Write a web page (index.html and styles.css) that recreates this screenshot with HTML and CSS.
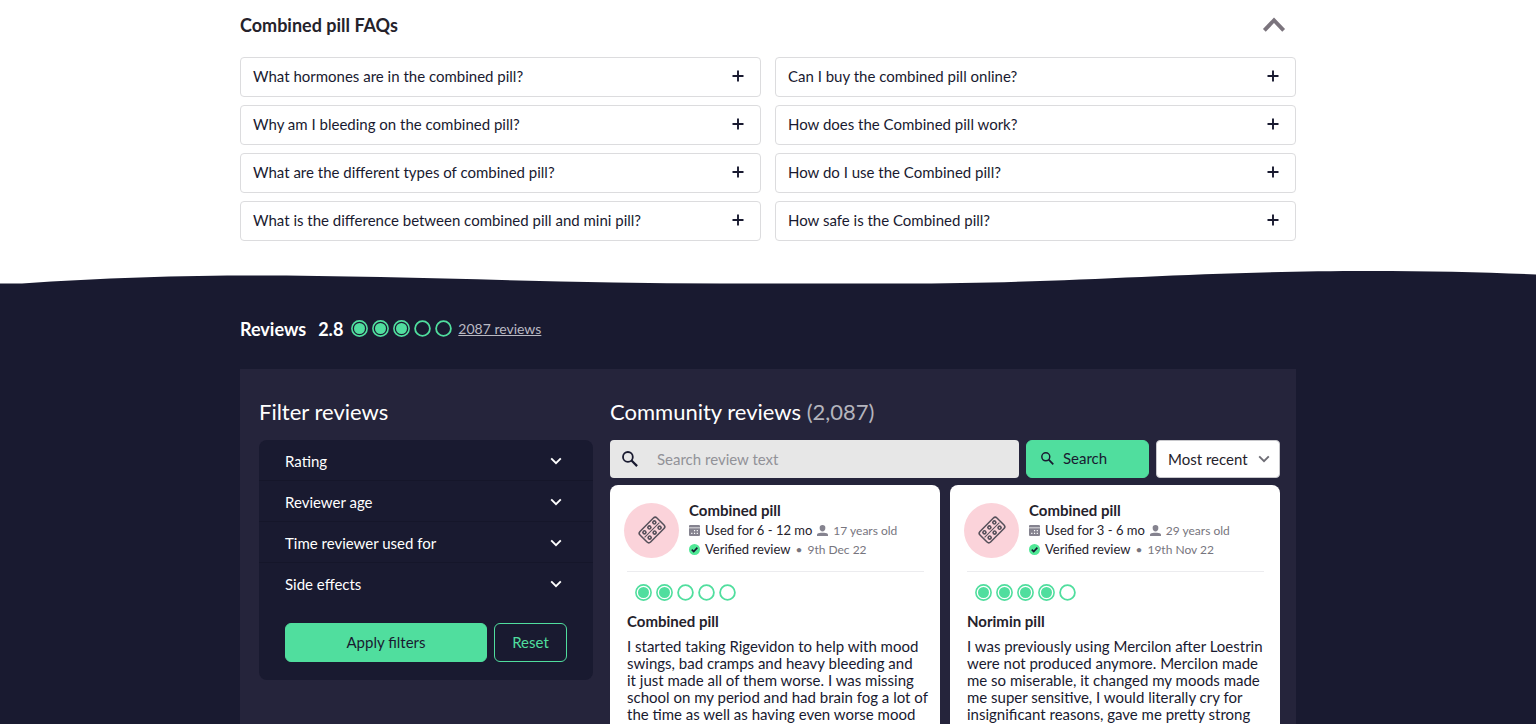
FILE: index.html
```html
<!DOCTYPE html>
<html lang="en">
<head>
<meta charset="utf-8">
<title>Combined pill reviews</title>
<link rel="stylesheet" href="styles.css">
</head>
<body>
<svg class="defs" aria-hidden="true">
  <symbol id="plus" viewBox="0 0 12 12"><path d="M6 0.5v11M0.5 6h11" stroke="currentColor" stroke-width="1.900" fill="none"/></symbol>
  <symbol id="down" viewBox="0 0 12 8"><path d="M1.200 1.400L6 6.200l4.800-4.800" stroke="currentColor" stroke-width="1.900" fill="none"/></symbol>
  <symbol id="search" viewBox="0 0 16 16"><circle cx="5.900" cy="5.900" r="4.900" stroke="currentColor" stroke-width="1.800" fill="none"/><path d="M9.500 9.500l5.600 5.600" stroke="currentColor" stroke-width="2.200"/></symbol>
  <symbol id="full" viewBox="0 0 17 17"><circle cx="8.500" cy="8.500" r="7.600" fill="none" stroke="#50de9e" stroke-width="1.600"/><circle cx="8.500" cy="8.500" r="5.500" fill="#50de9e"/></symbol>
  <symbol id="empty" viewBox="0 0 17 17"><circle cx="8.500" cy="8.500" r="7.400" fill="none" stroke="#50de9e" stroke-width="1.800"/></symbol>
  <symbol id="calendar" viewBox="0 0 10 10"><path fill="#85838f" d="M1 0h8a1 1 0 0 1 1 1v1.300H0V1a1 1 0 0 1 1-1z"/><path fill="#85838f" fill-rule="evenodd" d="M0 3h10v6a1 1 0 0 1-1 1H1a1 1 0 0 1-1-1zM4.500 4.500v1.100h1.100V4.500zM7 4.500v1.100h1.100V4.500zM2 7v1.100h1.100V7zM4.500 7v1.100h1.100V7zM7 7v1.100h1.100V7z"/></symbol>
  <symbol id="person" viewBox="0 0 10 10"><path fill="#85838f" d="M5 0a2.600 2.600 0 0 1 2.600 2.700C7.600 4.500 6.400 6 5 6S2.400 4.500 2.400 2.700A2.600 2.600 0 0 1 5 0zM0 10V8.800C0 7.700 2 7.300 3.600 7.100h2.800C8 7.300 10 7.700 10 8.800V10z"/></symbol>
  <symbol id="tick" viewBox="0 0 10 10"><circle cx="5" cy="5" r="5" fill="#50e896"/><path d="M2.500 5.100l1.800 1.700 3.300-3.500" stroke="#191a30" stroke-width="1.500" fill="none"/></symbol>
  <symbol id="blister" viewBox="0 0 30 30"><g transform="rotate(-45 15 15)" fill="none" stroke="#55505a" stroke-width="1.500"><rect x="3" y="7.500" width="24" height="15" rx="2.500"/><path d="M4.500 15h21" stroke-width="1"/><g stroke-width="1.600"><circle cx="8" cy="11.300" r="1.500"/><circle cx="15" cy="11.300" r="1.500"/><circle cx="22" cy="11.300" r="1.500"/><circle cx="8" cy="18.700" r="1.500"/><circle cx="15" cy="18.700" r="1.500"/><circle cx="22" cy="18.700" r="1.500"/></g></g></symbol>
</svg>

<section class="faqs container">
  <header class="faqs-head">
    <h2 class="title">Combined pill FAQs</h2>
    <button class="collapse" aria-label="Collapse FAQs"><svg class="collapse-icon" viewBox="0 0 22 14"><path d="M2 12.500L11 3l9 9.500" fill="none" stroke="#7b747d" stroke-width="3.600"/></svg></button>
  </header>
  <div class="faq-grid">
    <button class="faq">What hormones are in the combined pill?<svg class="plus"><use href="#plus"/></svg></button>
    <button class="faq">Can I buy the combined pill online?<svg class="plus"><use href="#plus"/></svg></button>
    <button class="faq">Why am I bleeding on the combined pill?<svg class="plus"><use href="#plus"/></svg></button>
    <button class="faq">How does the Combined pill work?<svg class="plus"><use href="#plus"/></svg></button>
    <button class="faq">What are the different types of combined pill?<svg class="plus"><use href="#plus"/></svg></button>
    <button class="faq">How do I use the Combined pill?<svg class="plus"><use href="#plus"/></svg></button>
    <button class="faq">What is the difference between combined pill and mini pill?<svg class="plus"><use href="#plus"/></svg></button>
    <button class="faq">How safe is the Combined pill?<svg class="plus"><use href="#plus"/></svg></button>
  </div>
</section>

<svg class="wave" viewBox="0 0 1536 16" preserveAspectRatio="none" aria-hidden="true"><path fill="#191a30" d="M0 13.500H22C100 8 180 5.500 256 5.500C400 5.500 560 13.500 720 13.500H900C1080 13.500 1180 1 1370 1C1430 1 1490 2.500 1536 4.500V16H0z"/></svg>

<section class="reviews">
  <div class="container">
    <header class="summary">
      <h2 class="title">Reviews</h2>
      <span class="score">2.8</span>
      <span class="dots" role="img" aria-label="2.8 out of 5"><svg class="dot"><use href="#full"/></svg><svg class="dot"><use href="#full"/></svg><svg class="dot"><use href="#full"/></svg><svg class="dot"><use href="#empty"/></svg><svg class="dot"><use href="#empty"/></svg></span>
      <a class="count" href="#community">2087 reviews</a>
    </header>

    <div class="panel">
      <aside class="filters">
        <h3 class="subtitle">Filter reviews</h3>
        <form class="filter-box">
          <button type="button" class="filter">Rating<svg class="down"><use href="#down"/></svg></button>
          <button type="button" class="filter">Reviewer age<svg class="down"><use href="#down"/></svg></button>
          <button type="button" class="filter">Time reviewer used for<svg class="down"><use href="#down"/></svg></button>
          <button type="button" class="filter">Side effects<svg class="down"><use href="#down"/></svg></button>
          <div class="filter-actions">
            <button type="button" class="btn apply">Apply filters</button>
            <button type="reset" class="btn reset">Reset</button>
          </div>
        </form>
      </aside>

      <div class="community" id="community">
        <h3 class="subtitle">Community reviews <span class="muted">(2,087)</span></h3>
        <form class="search-row">
          <label class="search-box">
            <svg class="search-icon"><use href="#search"/></svg>
            <input class="search-input" type="search" aria-label="Search review text" placeholder="Search review text">
          </label>
          <button type="button" class="btn search-btn"><svg class="search-icon small"><use href="#search"/></svg>Search</button>
          <div class="sort">
            <select class="sort-select" aria-label="Sort reviews"><option>Most recent</option></select>
            <svg class="down sort-icon"><use href="#down"/></svg>
          </div>
        </form>
        <div class="cards">
          <article class="card">
            <header class="card-head">
              <span class="avatar"><svg class="blister"><use href="#blister"/></svg></span>
              <div class="who">
                <h4 class="name">Combined pill</h4>
                <p class="meta"><svg class="mini"><use href="#calendar"/></svg>Used for 6 - 12 mo <svg class="mini"><use href="#person"/></svg><span class="grey">17 years old</span></p>
                <p class="meta"><svg class="mini"><use href="#tick"/></svg>Verified review <span class="grey">•</span><span class="grey">9th Dec 22</span></p>
              </div>
            </header>
            <div class="card-body">
              <span class="dots" role="img" aria-label="2 out of 5"><svg class="dot"><use href="#full"/></svg><svg class="dot"><use href="#full"/></svg><svg class="dot"><use href="#empty"/></svg><svg class="dot"><use href="#empty"/></svg><svg class="dot"><use href="#empty"/></svg></span>
              <h4 class="name">Combined pill</h4>
              <p class="text">I started taking Rigevidon to help with mood<br>swings, bad cramps and heavy bleeding and<br>it just made all of them worse. I was missing<br>school on my period and had brain fog a lot of<br>the time as well as having even worse mood</p>
            </div>
          </article>
          <article class="card">
            <header class="card-head">
              <span class="avatar"><svg class="blister"><use href="#blister"/></svg></span>
              <div class="who">
                <h4 class="name">Combined pill</h4>
                <p class="meta"><svg class="mini"><use href="#calendar"/></svg>Used for 3 - 6 mo <svg class="mini"><use href="#person"/></svg><span class="grey">29 years old</span></p>
                <p class="meta"><svg class="mini"><use href="#tick"/></svg>Verified review <span class="grey">•</span><span class="grey">19th Nov 22</span></p>
              </div>
            </header>
            <div class="card-body">
              <span class="dots" role="img" aria-label="4 out of 5"><svg class="dot"><use href="#full"/></svg><svg class="dot"><use href="#full"/></svg><svg class="dot"><use href="#full"/></svg><svg class="dot"><use href="#full"/></svg><svg class="dot"><use href="#empty"/></svg></span>
              <h4 class="name">Norimin pill</h4>
              <p class="text">I was previously using Mercilon after Loestrin<br>were not produced anymore. Mercilon made<br>me so miserable, it changed my moods made<br>me super sensitive, I would literally cry for<br>insignificant reasons, gave me pretty strong</p>
            </div>
          </article>
        </div>
      </div>
    </div>
  </div>
</section>
</body>
</html>
```
FILE: styles.css
```css
* { box-sizing: border-box; }
body {
  margin: 0;
  background: #fff;
  color: #191a30;
  font-family: Lato, "Open Sans", sans-serif;
  font-size: 15px;
}
h2, h3, h4, p { margin: 0; }
button, input, select { font: inherit; color: inherit; }
button { cursor: pointer; }
svg { flex: none; display: block; }
.defs { position: absolute; width: 0; height: 0; }
.container { max-width: 1056px; margin: 0 auto; }

.title { font-size: 18px; line-height: 24px; font-weight: 700; }
.faqs-head {
  display: flex;
  align-items: center;
  justify-content: space-between;
  height: 57px;
  padding: 0 10px 8px 0;
  color: #25222b;
}
.collapse { border: 0; background: none; padding: 0; }
.collapse-icon { width: 24px; height: 15px; }
.faq-grid {
  display: grid;
  grid-template-columns: 1fr 1fr;
  gap: 8px 14px;
  padding-bottom: 29px;
}
.faq {
  display: flex;
  align-items: center;
  justify-content: space-between;
  height: 40px;
  padding: 0 16px 2px 12px;
  border: 1px solid #dcdcde;
  border-radius: 4px;
  background: #fff;
  text-align: left;
}
.plus { width: 12px; height: 12px; }

.wave { width: 100%; height: 16px; }
.reviews { background: #191a30; color: #fff; }
.summary {
  display: flex;
  align-items: center;
  height: 83px;
  padding-top: 2px;
}
.score { margin: 0 8px 0 12px; font-size: 18px; font-weight: 700; }
.dots { display: flex; gap: 4px; }
.dot { width: 17px; height: 17px; }
.count { margin-left: 6px; color: #b9b9c2; font-size: 14px; }

.panel {
  display: flex;
  gap: 17px;
  padding: 30px 16px 0 19px;
  background: #25243b;
}
.filters { flex: 0 0 334px; }
.community { flex: 1; min-width: 0; }
.subtitle { font-size: 22px; line-height: 25px; font-weight: 400; margin-bottom: 16px; }
.muted { color: #b4b4bd; }

.filter-box { padding-bottom: 18px; border-radius: 8px; background: #191a30; }
.filter {
  display: flex;
  align-items: center;
  justify-content: space-between;
  width: 100%;
  height: 41px;
  padding: 2px 31px 0 26px;
  border: 0;
  border-bottom: 1px solid #15162a;
  background: none;
  text-align: left;
}
.filter:nth-of-type(4) { border-bottom-color: transparent; }
.down { width: 12px; height: 8px; }
.filter-actions { display: flex; gap: 7px; padding: 19px 26px 0; }
.btn { padding: 0 0 2px; border-radius: 6px; border: 1px solid #50de9e; background: #50de9e; color: #191a30; }
.apply { flex: 1; height: 39px; }
.reset { width: 73px; height: 39px; background: none; color: #50de9e; }

.search-row { display: flex; gap: 7px; margin-bottom: 7px; }
.search-box {
  flex: 1;
  display: flex;
  align-items: center;
  gap: 19px;
  height: 38px;
  padding: 0 12px;
  border-radius: 4px;
  background: #e7e7e7;
  color: #191a30;
}
.search-icon { width: 16px; height: 16px; }
.small { width: 13px; height: 13px; }
.search-input { flex: 1; min-width: 0; border: 0; padding: 0; background: none; outline: 0; }
.search-input::placeholder { color: #929298; opacity: 1; }
.search-btn { display: flex; align-items: center; gap: 9px; width: 123px; padding: 0 14px 2px; }
.sort { position: relative; width: 124px; color: #25222b; }
.sort-select {
  appearance: none;
  width: 100%;
  height: 38px;
  padding: 0 11px;
  border: 1px solid #c8c8cc;
  border-radius: 4px;
  background: #fff;
}
.sort-icon { position: absolute; right: 10px; top: 15px; color: #6e6d75; pointer-events: none; }

.cards { display: grid; grid-template-columns: repeat(2, minmax(0, 1fr)); gap: 10px; color: #191a30; }
.card { padding: 16px 16px 20px 14px; border-radius: 8px 8px 0 0; background: #fff; }
.card-head { display: flex; align-items: center; gap: 10px; }
.avatar {
  display: grid;
  place-items: center;
  width: 55px;
  height: 55px;
  border-radius: 50%;
  background: #fbd3da;
}
.blister { width: 30px; height: 30px; }
.name { font-size: 15px; line-height: 18px; font-weight: 700; color: #25222b; }
.who .name { margin-bottom: 2px; }
.meta { display: flex; align-items: center; gap: 5px; font-size: 13px; line-height: 19px; color: #25222b; }
.mini { width: 11px; height: 11px; }
.grey { font-size: 12px; color: #77757e; }
.card-body { margin: 12px 0 0 3px; padding-top: 12px; border-top: 1px solid #ececef; }
.card-body .dots { padding-left: 8px; margin-bottom: 11px; }
.text { margin-top: 8px; line-height: 17px; white-space: nowrap; }
```
